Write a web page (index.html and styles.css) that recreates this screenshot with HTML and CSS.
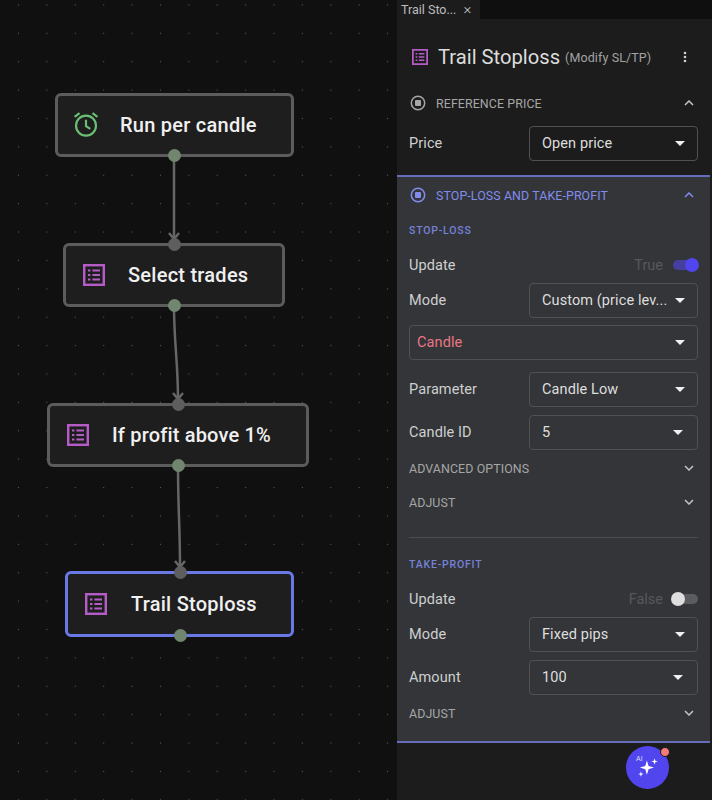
FILE: index.html
```html
<!DOCTYPE html>
<html lang="en">
<head>
<meta charset="utf-8">
<title>Trail Stoploss</title>
<link rel="stylesheet" href="styles.css">
</head>
<body>
<svg width="0" height="0" class="defs">
  <defs>
    <symbol id="list" viewBox="0 0 22 22">
      <rect x="1.200" y="1.200" width="19.600" height="19.600" fill="none" stroke="currentColor" stroke-width="2.400"/>
      <path d="M5 6.500h2.400M9.400 6.500h7.600M5 11h2.400M9.400 11h7.600M5 15.500h2.400M9.400 15.500h7.600" fill="none" stroke="currentColor" stroke-width="2.200"/>
    </symbol>
    <symbol id="caret" viewBox="0 0 10 5"><path d="M0 0h10L5 5z" fill="currentColor"/></symbol>
    <symbol id="up" viewBox="0 0 10 6"><path d="M1 5l4-4 4 4" fill="none" stroke="currentColor" stroke-width="1.500"/></symbol>
    <symbol id="down" viewBox="0 0 10 6"><path d="M1 1l4 4 4-4" fill="none" stroke="currentColor" stroke-width="1.500"/></symbol>
    <symbol id="stop" viewBox="0 0 16 16"><circle cx="8" cy="8" r="6.700" fill="none" stroke="currentColor" stroke-width="1.500"/><rect x="5" y="5" width="6" height="6" rx="1" fill="currentColor"/></symbol>
  </defs>
</svg>
<div class="app">
  <main class="canvas">
    <svg class="edges" width="397" height="800" viewBox="0 0 397 800">
      <g fill="none" stroke="#666" stroke-width="2.500">
        <path d="M174 155V240"/>
        <path d="M169 233l5 6 5-6"/>
        <path d="M174 305C174 345 178 360 178 400"/>
        <path d="M173 393l5 6 5-6"/>
        <path d="M178 465C178 510 180 525 180 568"/>
        <path d="M175 561l5 6 5-6"/>
      </g>
    </svg>
    <div class="node n1">
      <svg class="node-icon clock" viewBox="0 0 24 24" width="26" height="26"><circle cx="12" cy="13.500" r="9.200" fill="none" stroke="currentColor" stroke-width="2"/><path d="M12 8v6l4 2.500M1.500 5.500L6 2M22.500 5.500L18 2" fill="none" stroke="currentColor" stroke-width="2"/></svg>
      <span class="node-text">Run per candle</span>
      <i class="port out"></i>
    </div>
    <div class="node n2">
      <svg class="node-icon list" width="22" height="22"><use href="#list"/></svg>
      <span class="node-text">Select trades</span>
      <i class="port in"></i><i class="port out"></i>
    </div>
    <div class="node n3">
      <svg class="node-icon list" width="22" height="22"><use href="#list"/></svg>
      <span class="node-text">If profit above 1%</span>
      <i class="port in"></i><i class="port out"></i>
    </div>
    <div class="node n4">
      <svg class="node-icon list" width="22" height="22"><use href="#list"/></svg>
      <span class="node-text">Trail Stoploss</span>
      <i class="port in"></i><i class="port out"></i>
    </div>
  </main>
  <aside class="panel">
    <div class="tabs">
      <div class="tab"><span>Trail Sto...</span><span class="close">×</span></div>
    </div>
    <div class="body">
      <header class="head">
        <svg class="list head-icon" width="16" height="16"><use href="#list"/></svg>
        <h1>Trail Stoploss</h1>
        <span class="sub">(Modify SL/TP)</span>
        <svg class="more" width="4" height="12" viewBox="0 0 4 12"><circle cx="2" cy="2" r="1.300"/><circle cx="2" cy="6" r="1.300"/><circle cx="2" cy="10" r="1.300"/></svg>
      </header>
      <section class="sec-plain">
        <div class="sec-head">
          <svg width="16" height="16"><use href="#stop"/></svg>
          <span>REFERENCE PRICE</span>
          <svg class="chev" width="10" height="6"><use href="#up"/></svg>
        </div>
        <div class="row"><label>Price</label><div class="select">Open price<svg class="caret" width="10" height="5"><use href="#caret"/></svg></div></div>
      </section>
      <section class="sec-active">
        <div class="sec-head active">
          <svg width="16" height="16"><use href="#stop"/></svg>
          <span>STOP-LOSS AND TAKE-PROFIT</span>
          <svg class="chev" width="10" height="6"><use href="#up"/></svg>
        </div>
        <h2 class="sub-title sl">STOP-LOSS</h2>
        <div class="switch-row">
          <label>Update</label>
          <span class="state">True</span>
          <span class="switch on"><i></i></span>
        </div>
        <div class="row m-mode"><label>Mode</label><div class="select"><span class="clip">Custom (price lev...</span><svg class="caret" width="10" height="5"><use href="#caret"/></svg></div></div>
        <div class="row m-candle"><div class="select full"><span class="error">Candle</span><svg class="caret" width="10" height="5"><use href="#caret"/></svg></div></div>
        <div class="row m-param"><label>Parameter</label><div class="select">Candle Low<svg class="caret" width="10" height="5"><use href="#caret"/></svg></div></div>
        <div class="row m-id"><label>Candle ID</label><div class="select">5<svg class="caret shift" width="10" height="5"><use href="#caret"/></svg></div></div>
        <div class="fold adv"><span>ADVANCED OPTIONS</span><svg class="chev" width="10" height="6"><use href="#down"/></svg></div>
        <div class="fold adj"><span>ADJUST</span><svg class="chev" width="10" height="6"><use href="#down"/></svg></div>
        <hr>
        <h2 class="sub-title tp">TAKE-PROFIT</h2>
        <div class="switch-row">
          <label>Update</label>
          <span class="state">False</span>
          <span class="switch"><i></i></span>
        </div>
        <div class="row m-mode"><label>Mode</label><div class="select">Fixed pips<svg class="caret" width="10" height="5"><use href="#caret"/></svg></div></div>
        <div class="row m-param-tp"><label>Amount</label><div class="select">100<svg class="caret shift" width="10" height="5"><use href="#caret"/></svg></div></div>
        <div class="fold adj-tp"><span>ADJUST</span><svg class="chev" width="10" height="6"><use href="#down"/></svg></div>
      </section>
    </div>
    <button class="fab" type="button" aria-label="AI assistant">
      <span class="ai">AI</span>
      <svg width="24" height="24" viewBox="0 0 22 22" class="spark"><path fill="#fff" d="M10 5l1.500 5 5 1.500-5 1.500L10 18l-1.500-5-5-1.500 5-1.500zM17 3l.7 2.300L20 6l-2.300.7L17 9l-.7-2.300L14 6l2.300-.7zM4.500 15l.6 1.900 1.900.6-1.900.6-.6 1.900-.6-1.900-1.900-.6 1.900-.6z"/></svg>
      <i class="dot"></i>
    </button>
  </aside>
</div>
</body>
</html>
```
FILE: styles.css
```css
* { box-sizing: border-box; }
html, body { margin: 0; padding: 0; }
body { width: 712px; height: 800px; overflow: hidden; background: #0f0f0f; font-family: Roboto, "Liberation Sans", sans-serif; color: #d6d6d6; }
.defs { position: absolute; }
.app { display: flex; width: 712px; height: 800px; }

.canvas {
  position: relative; flex: 0 0 397px; height: 800px; background-color: #101011;
  background-image: radial-gradient(circle at center, #5a5a5a 0, #5a5a5a .6px, transparent 1px);
  background-size: 28.4px 28.4px; background-position: 4.3px -9.3px;
}
.edges { position: absolute; left: 0; top: 0; }
.node {
  position: absolute; display: flex; align-items: center; background: #1e1e1f;
  border: 3px solid #5c5c5c; border-radius: 6px; height: 64px;
}
.n1 { left: 55px; top: 93px; width: 239px; }
.n2 { left: 63px; top: 243px; width: 222px; }
.n3 { left: 47px; top: 403px; width: 262px; }
.n4 { left: 65px; top: 571px; width: 229px; height: 66px; border-color: #6a78e6; }
.node-icon { flex: none; }
.clock { color: #69bf74; margin-left: 15px; margin-top: -2px; }
.list { color: #b65cc8; }
.node .list { margin-left: 17px; }
.node-text { font-size: 20px; font-weight: 500; color: #f0f0f0; white-space: nowrap; letter-spacing: .25px; }
.n1 .node-text { margin-left: 21px; }
.n2 .node-text { margin-left: 23px; }
.n3 .node-text { margin-left: 23px; letter-spacing: .18px; }
.n4 .node-text { margin-left: 24px; }
.port { position: absolute; width: 13px; height: 13px; border-radius: 50%; }
.port.out { background: #71866f; bottom: -8px; }
.port.in { background: #5e5e5e; top: -8px; }
.n1 .port { left: 110px; }
.n2 .port { left: 102px; }
.n3 .port { left: 122px; }
.n4 .port { left: 106px; }

.panel { position: relative; flex: 0 0 315px; display: flex; flex-direction: column; background: #1c1c1d; height: 800px; }
.tabs { height: 19px; background: #0f0f10; flex: none; }
.tab { width: 83px; height: 19px; background: #1c1c1d; display: flex; align-items: center; padding-left: 4px; font-size: 12.500px; color: #bdbdbd; gap: 7px; white-space: nowrap; }
.close { font-size: 15px; font-weight: 300; line-height: 15px; color: #cfcfcf; }
.body { width: 313px; flex: 1; }
.head { display: flex; align-items: center; height: 26px; margin: 25px 0 0 15px; }
.head-icon { flex: none; }
.head h1 { margin: 0 0 0 10px; font-size: 20.200px; font-weight: 400; color: #dcdcdc; white-space: nowrap; }
.sub { margin-left: 5px; font-size: 12.500px; color: #a3a3a3; white-space: nowrap; letter-spacing: .1px; }
.more { margin-left: auto; margin-right: 23px; fill: #cfcfcf; flex: none; }

.sec-plain { height: 105px; padding-top: 23px; }
.sec-head { display: flex; align-items: center; height: 20px; margin: 0 16px 0 13px; color: #a6a6a6; font-size: 12.400px; letter-spacing: .1px; }
.sec-head svg:first-child { flex: none; margin-right: 10px; }
.sec-head .chev { margin-left: auto; color: #c4c4c4; }
.sec-head.active { color: #828ced; }
.sec-head.active .chev { color: #828ced; }

.row { display: flex; align-items: center; justify-content: space-between; margin: 0 12px; }
.sec-plain .row { margin-top: 13px; }
label { font-size: 14.500px; color: #cfcfcf; letter-spacing: .1px; }
.select {
  position: relative; display: flex; align-items: center; justify-content: space-between; width: 169px; height: 35px;
  border: 1px solid #515153; border-radius: 4px; padding: 0 12px; font-size: 14.500px; color: #dedede; letter-spacing: .1px; white-space: nowrap;
}
.select.full { width: 289px; padding-left: 7px; }
.clip { overflow: hidden; }
.error { color: #ea7684; }
.caret { color: #f0f0f0; flex: none; }
.caret.shift { margin-right: 2px; }

.sec-active { height: 568px; background: #333538; border-top: 2px solid #666dbb; border-bottom: 2px solid #666dbb; padding-top: 8px; }
.sub-title { margin: 0 12px; font-size: 10.500px; font-weight: 500; color: #7681d8; letter-spacing: .8px; line-height: 14px; }
.sl { margin-top: 19px; }
.tp { margin-top: 20px; }
.switch-row { display: flex; align-items: center; height: 20px; margin: 17px 12px 0; }
.state { margin-left: auto; margin-right: 10px; font-size: 14.500px; color: #58585b; }
.switch { position: relative; display: block; width: 25px; height: 10px; border-radius: 5px; background: #5c5c60; }
.switch i { position: absolute; top: -2.500px; left: -2px; width: 14px; height: 14px; border-radius: 50%; background: #dedede; }
.switch.on { background: #463f9f; }
.switch.on i { left: 12px; background: #5145ed; }
.m-mode { margin-top: 8px; }
.m-candle { margin-top: 7px; }
.m-param { margin-top: 12px; }
.m-id { margin-top: 8px; }
.m-param-tp { margin-top: 8px; }
.fold { display: flex; align-items: center; justify-content: space-between; margin: 0 16px 0 12px; height: 20px; font-size: 12.400px; color: #a6a6a6; letter-spacing: .1px; }
.fold .chev { color: #c4c4c4; }
.adv { margin-top: 8px; }
.adj { margin-top: 14px; }
.adj-tp { margin-top: 8px; }
hr { border: 0; border-top: 1px solid #4b4c4f; margin: 25px 12px 0; }

.fab { position: absolute; left: 229px; top: 746px; width: 43px; height: 43px; border: 0; padding: 0; border-radius: 50%; background: #5145ee; }
.ai { position: absolute; left: 10px; top: 9px; font-size: 7px; color: #dcdcf8; line-height: 8px; }
.spark { position: absolute; left: 10px; top: 9px; }
.dot { position: absolute; right: -1px; top: 1px; width: 10px; height: 10px; border-radius: 50%; background: #f47a78; border: 1.500px solid #1c1c1d; }
```
